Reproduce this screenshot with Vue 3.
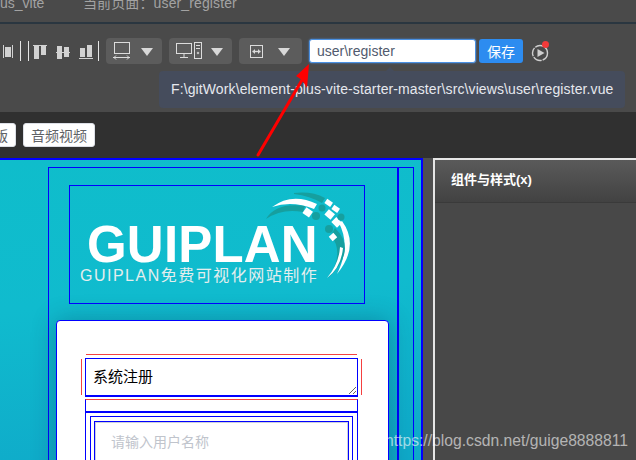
<script setup>
import { ref } from "vue";

const pageName = ref("user_register");
const pagePath = ref("user\\register");
const filePath = "F:\\gitWork\\element-plus-vite-starter-master\\src\\views\\user\\register.vue";
const title = ref("系统注册");
const userName = ref("");
</script>

<template>
  <div class="app">
    <div class="topbar">
      <span class="project">us_vite</span>
      <span class="current">当前页面：{{ pageName }}</span>
    </div>

    <div class="toolbar">
      <svg class="align-icons" width="106" height="26" viewBox="0 38 106 26" fill="#d2d2d2">
        <!-- distribute -->
        <rect x="3" y="45" width="1" height="13" />
        <rect x="12" y="45" width="1" height="13" />
        <rect x="5" y="47" width="6" height="10" />
        <!-- separators -->
        <rect x="20" y="41" width="1" height="20" fill="#e6e6e6" />
        <rect x="28" y="41" width="1" height="20" fill="#e6e6e6" />
        <!-- align top -->
        <rect x="33" y="45" width="14" height="1" />
        <rect x="34" y="46" width="5" height="13" />
        <rect x="41" y="46" width="5" height="9" />
        <!-- align middle -->
        <rect x="56" y="52" width="14" height="1" />
        <rect x="57" y="46" width="5" height="13" />
        <rect x="64" y="47" width="5" height="10" />
        <!-- align bottom -->
        <rect x="79" y="58" width="14" height="1" />
        <rect x="80" y="48" width="5" height="9" />
        <rect x="87" y="45" width="5" height="12" />
        <rect x="98" y="41" width="1" height="20" fill="#e6e6e6" />
      </svg>

      <div class="drop first">
        <svg width="18" height="18" viewBox="0 0 18 18" fill="none" stroke="#dcdcdc">
          <rect x="1.5" y="0.5" width="15" height="11" />
          <path d="M0 15.5h17M3 13.5l-2 2 2 2M14 13.5l2 2-2 2" />
        </svg>
        <i class="caret"></i>
      </div>
      <div class="drop second">
        <svg width="26" height="18" viewBox="0 0 26 18" fill="none" stroke="#dcdcdc">
          <rect x="0.5" y="1.5" width="15" height="10" />
          <path d="M8 12v3M4 15.5h8" />
          <rect x="18.5" y="0.5" width="7" height="16" />
          <path d="M20 3.5h4M20 6.5h4" />
          <circle cx="22" cy="11" r="0.8" />
        </svg>
        <i class="caret"></i>
      </div>
      <div class="drop third">
        <svg width="13" height="13" viewBox="0 0 13 13" fill="none" stroke="#dcdcdc">
          <rect x="0.5" y="0.5" width="12" height="12" />
          <path d="M2.5 6.5h8" stroke-width="1.4" />
          <path d="M5 4L2.5 6.5 5 9zM8 4l2.5 2.5L8 9z" fill="#dcdcdc" stroke="none" />
        </svg>
        <i class="caret"></i>
      </div>

      <input class="path-input" v-model="pagePath" />
      <button class="save">保存</button>
      <span class="run">
        <svg width="18" height="18" viewBox="0 0 18 18">
          <circle cx="9" cy="9" r="7.5" fill="none" stroke="#cfcfcf" stroke-width="1.4" stroke-dasharray="9 1" />
          <path d="M6.5 5l7 4-7 4z" fill="#cfcfcf" />
        </svg>
        <i class="dot"></i>
      </span>

      <div class="tip">{{ filePath }}</div>
    </div>

    <div class="tabs">
      <button class="tab cut">模版</button>
      <button class="tab">音频视频</button>
    </div>

    <div class="workspace">
      <div class="stage">
        <div class="page">
          <div class="main">
            <div class="logo">
              <div class="logo-name">GUIPLAN</div>
              <div class="logo-sub">GUIPLAN免费可视化网站制作</div>
              <svg class="swoosh" width="90" height="90" viewBox="264 192 90 90">
                <path d="M272 207Q292 192 317 204L314 209Q292 200 272 207z" fill="#fff" />
                <path d="M266 219Q276 202 305 206L303 212Q282 208 266 219z" fill="#169f9f" />
                <path d="M294 193Q312 191 325 198L322 203Q310 196 294 194z" fill="#169f9f" />
                <path d="M342 221Q360 246 337 274Q351 246 339 223z" fill="#fff" />
                <path d="M335 228Q358 250 328 278Q345 254 331 235z" fill="#169f9f" />
                <path d="M327 278Q341 268 343 248L340 247Q339 264 327 278z" fill="#fff" />
                <g fill="#fff">
                  <rect x="304" y="209" width="8" height="7" transform="rotate(35 308 212)" />
                  <rect x="325" y="200" width="7" height="5" transform="rotate(35 328 203)" />
                  <rect x="332" y="206" width="7" height="5" transform="rotate(35 335 209)" />
                  <rect x="326" y="211" width="8" height="7" transform="rotate(40 330 214)" />
                  <rect x="333" y="219" width="8" height="7" transform="rotate(45 337 222)" />
                  <rect x="330" y="234" width="6" height="6" transform="rotate(50 333 237)" />
                </g>
                <g fill="#169f9f">
                  <circle cx="316" cy="216" r="4" />
                  <circle cx="322" cy="208" r="3.5" />
                  <circle cx="341" cy="217" r="3.5" />
                  <circle cx="329" cy="229" r="4" />
                </g>
              </svg>
            </div>

            <div class="card">
              <div class="field-line"></div>
              <div class="title-wrap">
                <textarea class="title" v-model="title"></textarea>
                <i class="side left"></i>
                <i class="side right"></i>
              </div>
              <div class="gap-row"></div>
              <div class="outer">
                <div class="inner">
                  <input class="user" v-model="userName" placeholder="请输入用户名称" />
                </div>
              </div>
            </div>
          </div>
          <div class="rail"></div>
        </div>
      </div>

      <div class="panel">
        <div class="panel-head">组件与样式(x)</div>
      </div>
    </div>

    <svg class="arrow" width="70" height="100" viewBox="250 60 70 100">
      <path d="M258 155L302 80" stroke="#f00" stroke-width="3" stroke-linecap="round" fill="none" />
      <path d="M309 64L296 76L302 80L307 88z" fill="#f00" />
    </svg>
    <div class="mark">https://blog.csdn.net/guige8888811</div>
  </div>
</template>

<style>
html,
body {
  margin: 0;
  background: #484848;
  overflow: hidden;
}
</style>

<style scoped>
* {
  box-sizing: border-box;
}

.app {
  position: relative;
  width: 636px;
  height: 460px;
  overflow: hidden;
  font-family: "Liberation Sans", "Noto Sans CJK SC", sans-serif;
  font-size: 14px;
}

.topbar {
  height: 24px;
  background: #4a4a4a;
  border-bottom: 2px solid #2a3640;
  color: #a3a3a3;
  line-height: 14px;
  display: flex;
  overflow: hidden;
}

.project {
  width: 83px;
  margin-top: -4px;
}

.current {
  margin-top: -4px;
  letter-spacing: 0.12px;
}

.toolbar {
  position: relative;
  height: 88px;
  background: #4a4a4a;
  display: flex;
  align-items: flex-start;
  padding-top: 14px;
}

.align-icons {
  flex: none;
}

.drop {
  height: 26px;
  margin-right: 7px;
  background: #5c5c5c;
  border-radius: 4px;
  display: flex;
  align-items: center;
  flex: none;
}

.drop.first {
  width: 56px;
  padding-left: 7px;
  gap: 10px;
}

.drop.second {
  width: 63px;
  padding-left: 7px;
  gap: 9px;
}

.drop.third {
  width: 63px;
  padding-left: 11px;
  gap: 15px;
}

.caret {
  width: 0;
  height: 0;
  margin-top: 2px;
  border-left: 6.5px solid transparent;
  border-right: 6.5px solid transparent;
  border-top: 8px solid #d8d8d8;
}

.path-input {
  width: 167px;
  height: 24px;
  margin-top: 1px;
  padding: 0 7px;
  border: 1px solid #4a90e2;
  border-radius: 3px;
  background: #fff;
  box-shadow: 0 0 2px #4a90e2;
  color: #515a6e;
  font: 14px "Liberation Sans", sans-serif;
  outline: none;
}

.save {
  width: 44px;
  height: 24px;
  margin: 1px 0 0 3px;
  padding: 0;
  border: none;
  border-radius: 3px;
  background: #2d8cf0;
  color: #fff;
  font-family: inherit;
  font-size: 14px;
}

.run {
  position: relative;
  width: 18px;
  height: 18px;
  margin: 6px 0 0 8px;
}

.run svg {
  display: block;
}

.dot {
  position: absolute;
  right: 0;
  top: -3px;
  width: 7px;
  height: 7px;
  border-radius: 50%;
  background: #f23a3a;
}

.tip {
  position: absolute;
  left: 159px;
  top: 47px;
  width: 466px;
  height: 37px;
  padding-left: 12px;
  border-radius: 4px;
  background: #454c5c;
  color: #e6e8ee;
  line-height: 37px;
  letter-spacing: 0.11px;
  white-space: nowrap;
}

.tip::before {
  content: "";
  position: absolute;
  left: 227px;
  top: -4px;
  border-left: 4px solid transparent;
  border-right: 4px solid transparent;
  border-bottom: 4px solid #454c5c;
}

.tabs {
  height: 46px;
  background: #303030;
  display: flex;
  align-items: flex-start;
  gap: 7px;
  padding-top: 11px;
}

.tab {
  height: 24px;
  padding: 0;
  width: 72px;
  border: 1px solid #dcdfe6;
  border-radius: 3px;
  background: #fff;
  color: #606266;
  font-family: inherit;
  font-size: 14px;
  flex: none;
}

.tab.cut {
  width: 44px;
  margin-left: -28px;
}

.workspace {
  height: 302px;
  display: flex;
  background: #505050;
}

.stage {
  width: 423px;
  padding: 7px 0 0 48px;
  border-top: 2px solid #0000ff;
  border-right: 2px solid #0000ff;
  background: linear-gradient(175deg, #0fbdcb 0, #10bbce 45%, #0fa9c9 100%);
  overflow: hidden;
  flex: none;
}

.page {
  width: 366px;
  height: 320px;
  border: 1px solid #0000ff;
  border-bottom: none;
  display: flex;
}

.main {
  width: 350px;
  padding-top: 17px;
  border-right: 2px solid #0000ff;
  flex: none;
}

.rail {
  width: 15px;
}

.logo {
  position: relative;
  width: 296px;
  height: 119px;
  margin: 0 0 16px 20px;
  padding: 38px 0 0 17px;
  border: 1px solid #0000ff;
}

.logo-name {
  color: #fff;
  font-size: 51px;
  font-weight: 700;
  line-height: 42px;
  letter-spacing: 0.2px;
}

.logo-sub {
  margin: 0 0 0 -7px;
  color: #e4eeee;
  font-size: 16px;
  line-height: 20px;
  letter-spacing: 1.5px;
  white-space: nowrap;
}

.swoosh {
  position: absolute;
  left: 194px;
  top: 6px;
}

.card {
  width: 333px;
  height: 160px;
  margin-left: 7px;
  padding: 33px 0 0 28px;
  border: 1px solid #0000ff;
  border-radius: 4px;
  background: #fff;
  box-shadow: 0 0 24px rgba(0, 40, 70, 0.3);
}

.field-line {
  width: 271px;
  height: 1px;
  margin: 0 0 3px 1px;
  background: #f54040;
}

.title-wrap {
  position: relative;
  width: 273px;
  height: 39px;
}

.title {
  display: block;
  width: 273px;
  height: 39px;
  padding: 6px 7px;
  border: 1px solid #0000ff;
  border-bottom-width: 2px;
  border-radius: 0;
  background: #fff;
  color: #000;
  font: 15px "Noto Sans CJK SC", sans-serif;
  outline: none;
}

.side {
  position: absolute;
  top: 1px;
  width: 1px;
  height: 36px;
  background: #f54040;
}

.side.left {
  left: -4px;
}

.side.right {
  right: -4px;
}

.gap-row {
  width: 273px;
  height: 14px;
  border-top: 1px solid #f54040;
  border-bottom: 2px solid #0000ff;
  border-left: 1px solid #0000ff;
  border-right: 1px solid #0000ff;
  margin-top: 2px;
}

.outer {
  width: 273px;
  height: 60px;
  padding: 3px 4px 0;
  border: 1px solid #0000ff;
  border-top: none;
}

.inner {
  height: 60px;
  padding: 4px 3px 0;
  border: 1px solid #0000ff;
}

.user {
  display: block;
  width: 100%;
  height: 42px;
  padding: 0 16px 2px;
  border: 1px solid #0000ff;
  outline: 1px solid #ccd0dc;
  outline-offset: -2px;
  background: #fff;
  font: 14px "Noto Sans CJK SC", sans-serif;
}

.user::placeholder {
  color: #c0c4cc;
}

.panel {
  width: 203px;
  margin-left: 10px;
  border-top: 2px solid #e6e6e6;
  border-left: 2px solid #e6e6e6;
  background: #484848;
  flex: none;
}

.panel-head {
  height: 43px;
  padding-left: 16px;
  background: linear-gradient(180deg, #5a5a5a, #424242);
  border-bottom: 1px solid #3a3a3a;
  color: #fff;
  font-size: 13px;
  font-weight: 700;
  line-height: 40px;
}

.arrow {
  position: absolute;
  left: 250px;
  top: 60px;
}

.mark {
  position: absolute;
  left: 385px;
  top: 431px;
  color: rgba(255, 255, 255, 0.6);
  font-size: 15.7px;
  line-height: 20px;
  white-space: nowrap;
}
</style>
